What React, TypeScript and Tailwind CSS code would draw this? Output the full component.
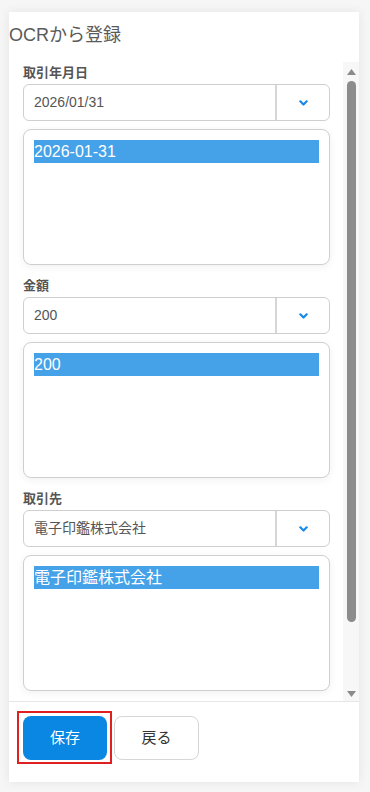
import React from 'react';

const FONT = { fontFamily: '"Liberation Sans", Arial, "Noto Sans CJK JP", sans-serif' };

interface FieldProps {
  label: string;
  value: string;
  picked: string;
  first?: boolean;
}

const Chevron = () => (
  <svg width="9" height="6" viewBox="0 0 9 6" fill="none">
    <polyline points="1.3,1.3 4.5,4.5 7.7,1.3" stroke="#1a88e8" strokeWidth="2.2" strokeLinecap="round" strokeLinejoin="round" />
  </svg>
);

const Field: React.FC<FieldProps> = ({ label, value, picked, first }) => (
  <div className={first ? 'flex flex-col' : 'flex flex-col mt-[12px]'}>
    <div className="h-[18px] leading-[18px] text-[13px] font-bold text-[#555] mb-[2px]">{label}</div>
    <div className="flex h-[37px] border border-[#cfcfcf] rounded-[6px] bg-white overflow-hidden">
      <div className="flex-1 flex items-center pl-[10px] text-[14px] text-[#555] border-r-2 border-[#d6d6d6]">{value}</div>
      <div className="w-[52px] flex items-center justify-center">
        <Chevron />
      </div>
    </div>
    <div className="mt-[8px] h-[136px] border border-[#cfcfcf] rounded-[8px] bg-white shadow-[0_2px_8px_rgba(0,0,0,0.06)] px-[10px] pt-[10px]">
      <div className="h-[23px] leading-[23px] bg-[#45a1e8] text-white text-[16px]">{picked}</div>
    </div>
  </div>
);

const ScrollBar = () => (
  <div className="w-[16px] bg-[#f7f7f7] flex flex-col items-center">
    <svg className="mt-[7px]" width="9" height="6" viewBox="0 0 9 6">
      <polygon points="4.5,0 9,6 0,6" fill="#8a8a8a" />
    </svg>
    <div className="mt-[6px] w-[9px] h-[541px] rounded-full bg-[#8c8c8c]" />
    <div className="flex-1" />
    <svg className="mb-[4px]" width="9" height="6" viewBox="0 0 9 6">
      <polygon points="0,0 9,0 4.5,6" fill="#8a8a8a" />
    </svg>
  </div>
);

export default function App() {
  return (
    <div className="w-[370px] h-[792px] bg-[#f6f6f6] pt-[12px] pl-[9px]" style={FONT}>
      <div className="w-[350px] h-[770px] bg-white shadow-[0_0_10px_rgba(0,0,0,0.08)] flex flex-col">
        <div className="pt-[11px] h-[50px] text-[18px] leading-[24px] text-[#5a5a5a]">OCRから登録</div>
        <div className="h-[639px] flex">
          <div className="flex-1 pl-[14px] pr-[13px] pt-[2px]">
            <Field first label="取引年月日" value="2026/01/31" picked="2026-01-31" />
            <Field label="金額" value="200" picked="200" />
            <Field label="取引先" value="電子印鑑株式会社" picked="電子印鑑株式会社" />
          </div>
          <ScrollBar />
        </div>
        <div className="border-t border-[#e6e6e6] flex items-start gap-[2px] pl-[8px] pt-[9px]">
          <div className="border-2 border-[#e02020] pl-[4px] pr-[3px] pt-[3px] pb-[2px]">
            <button className="block w-[84px] h-[44px] rounded-[8px] bg-[#0a86e3] text-white text-[15px]">保存</button>
          </div>
          <button className="mt-[5px] w-[85px] h-[44px] rounded-[8px] bg-white border border-[#d6d6d6] text-[#333] text-[15px]">
            戻る
          </button>
        </div>
      </div>
    </div>
  );
}
